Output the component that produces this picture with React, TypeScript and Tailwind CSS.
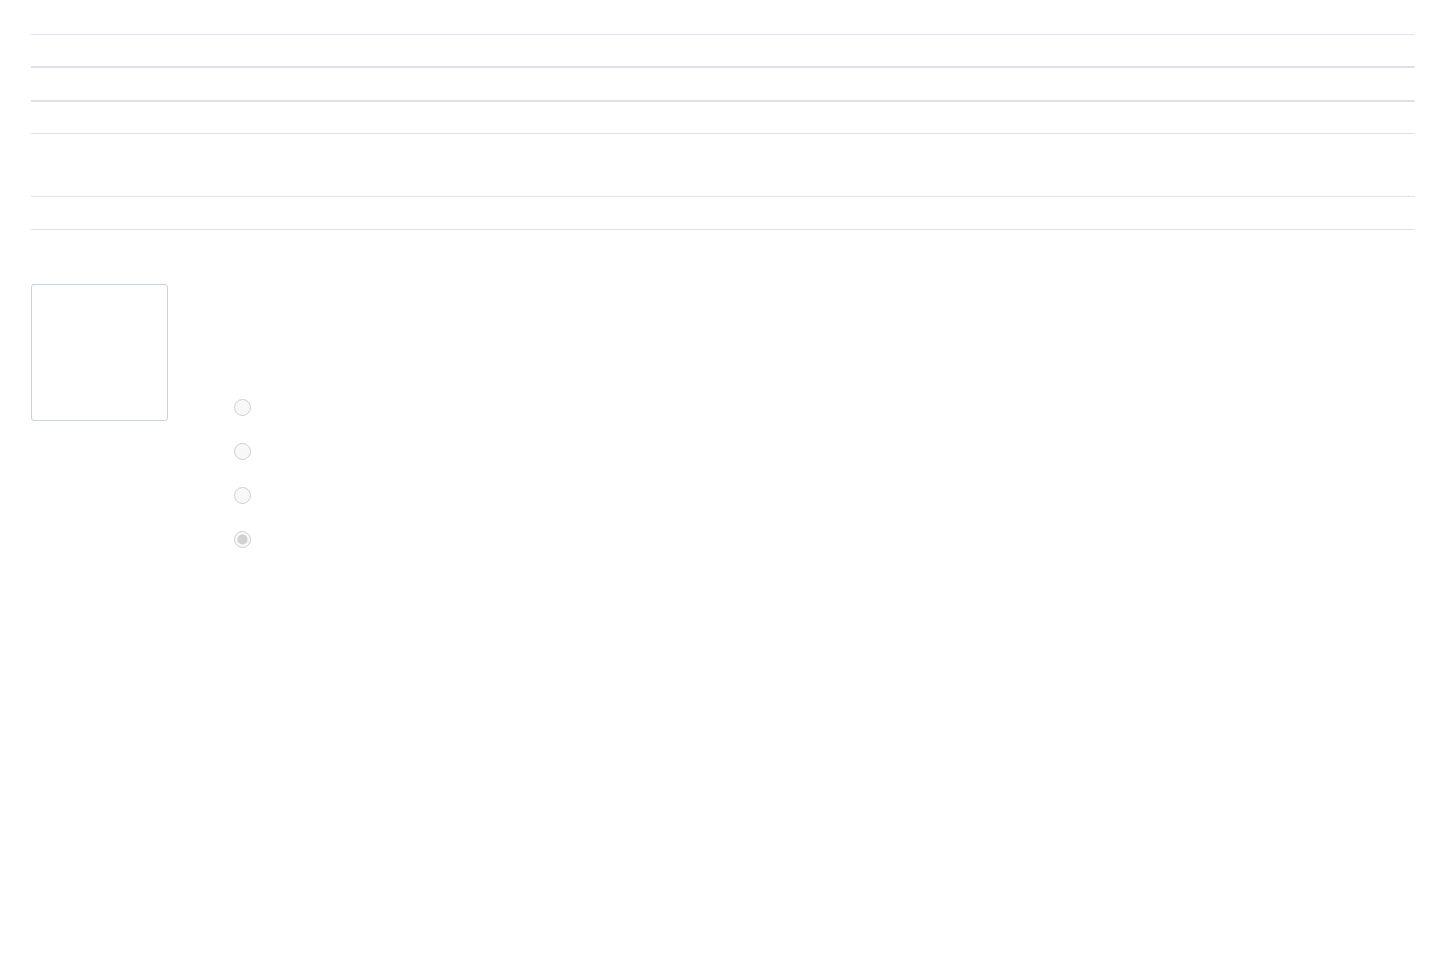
import React from "react";

const App = () => {
  const rows = [
    { h: "h-[32px]", line: "border-b border-[#e4e3e9]" },
    { h: "h-[33px]", line: "border-b-2 border-[#dee1e5]" },
    { h: "h-[34px]", line: "border-b-2 border-[#dee1e5]" },
    { h: "h-[32px]", line: "border-b border-[#e2e2e4]" },
    { h: "h-[63px]", line: "border-b border-[#e2e2e5]" },
    { h: "h-[33px]", line: "border-b border-[#e2e2e4]" },
  ];

  const options = [false, false, false, true];

  return (
    <div className="min-h-[967px] w-full bg-white px-[31px] pt-[3px] font-['Liberation_Sans',sans-serif]">
      {/* Table rows */}
      <div className="flex flex-col">
        {rows.map((row, idx) => (
          <div key={idx} className={`${row.h} ${row.line} w-full`} />
        ))}
      </div>

      {/* Preview + options */}
      <div className="mt-[54px] flex items-start">
        <div className="h-[137px] w-[137px] rounded-[3px] border border-[#ccd2d9] bg-white" />

        <div className="ml-[66px] mt-[115px] flex flex-col gap-[27px]">
          {options.map((checked, idx) => (
            <label key={idx} className="flex h-[17px] items-center">
              <input
                type="radio"
                name="opt"
                disabled
                defaultChecked={checked}
                className="m-0 h-[17px] w-[17px]"
              />
            </label>
          ))}
        </div>
      </div>
    </div>
  );
};

export default App;
